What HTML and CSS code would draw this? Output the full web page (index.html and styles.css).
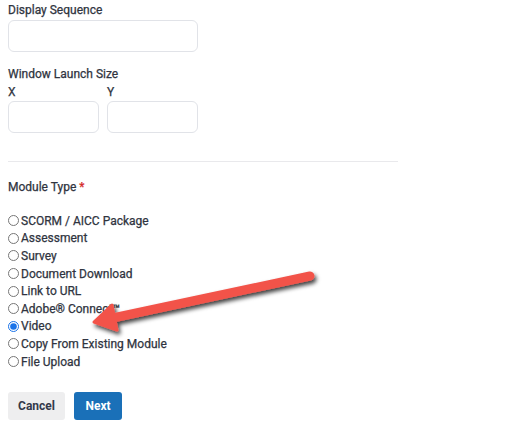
FILE: index.html
```html
<!DOCTYPE html>
<html lang="en">
<head>
    <meta charset="UTF-8">
    <meta name="viewport" content="width=device-width, initial-scale=1.0">
    <title>Module Settings</title>
    <link rel="stylesheet" href="styles.css">
</head>
<body>

    <div class="form">
        <label class="field-label first">Display Sequence</label>
        <input type="text" class="box wide">

        <label class="field-label launch">Window Launch Size</label>
        <div class="size-row">
            <div class="size-col">
                <label class="field-label">X</label>
                <input type="text" class="box narrow">
            </div>
            <div class="size-col">
                <label class="field-label">Y</label>
                <input type="text" class="box narrow">
            </div>
        </div>

        <hr class="divider">

        <label class="field-label module">Module Type <span class="req">*</span></label>

        <div class="options">
            <label class="opt"><input type="radio" name="type">SCORM / AICC Package</label>
            <label class="opt"><input type="radio" name="type">Assessment</label>
            <label class="opt"><input type="radio" name="type">Survey</label>
            <label class="opt"><input type="radio" name="type">Document Download</label>
            <label class="opt"><input type="radio" name="type">Link to URL</label>
            <label class="opt"><input type="radio" name="type">Adobe® Connect™</label>
            <label class="opt"><input type="radio" name="type" checked>Video</label>
            <label class="opt"><input type="radio" name="type">Copy From Existing Module</label>
            <label class="opt"><input type="radio" name="type">File Upload</label>
        </div>

        <div class="buttons">
            <button class="btn cancel">Cancel</button>
            <button class="btn next">Next</button>
        </div>
    </div>

    <!-- annotation arrow -->
    <svg class="arrow" width="517" height="426" viewBox="0 0 517 426">
        <defs>
            <filter id="shadow" x="-20%" y="-50%" width="140%" height="200%">
                <feDropShadow dx="2" dy="3" stdDeviation="2" flood-color="#000" flood-opacity="0.75"/>
            </filter>
        </defs>
        <g filter="url(#shadow)">
            <line x1="310" y1="276" x2="108" y2="319" stroke="#f2534a" stroke-width="9" stroke-linecap="round"/>
            <path d="M94 322 L112 305 L117 330 Z" fill="#f2534a" stroke="#f2534a" stroke-width="3" stroke-linejoin="round"/>
        </g>
    </svg>

</body>
</html>
```

FILE: styles.css
```css
body {
    margin: 0;
    padding: 0 8px;
    background: #fff;
    font-family: Roboto, "Liberation Sans", Arial, sans-serif;
    font-size: 12px;
    color: #2f3440;
}

.form {
    width: 390px;
    display: flex;
    flex-direction: column;
    align-items: flex-start;
}

.field-label {
    display: block;
    font-weight: 400;
    line-height: 16px;
    -webkit-text-stroke: 0.25px #2f3440;
}

.first {
    margin-top: 2px;
}

.box {
    box-sizing: border-box;
    height: 32px;
    border: 1px solid #e1e3e8;
    border-radius: 6px;
    background: #fff;
    margin: 2px 0 0;
    padding: 0 8px;
}

.wide {
    width: 190px;
}

.narrow {
    width: 91px;
    margin-top: 1px;
}

.launch {
    margin-top: 14px;
}

.size-row {
    display: flex;
    gap: 8px;
    margin-top: 2px;
}

.divider {
    width: 390px;
    border: none;
    border-top: 1px solid #e9e9ec;
    margin: 28px 0 0;
}

.module {
    margin-top: 17px;
}

.req {
    color: #d42a2a;
    -webkit-text-stroke: 0.25px #d42a2a;
}

.options {
    margin-top: 17px;
    display: flex;
    flex-direction: column;
}

.opt {
    display: flex;
    align-items: center;
    height: 17.6px;
    font-weight: 400;
    -webkit-text-stroke: 0.25px #2f3440;
}

.opt input {
    width: 11px;
    height: 11px;
    margin: 0 2px 0 0;
    accent-color: #1a73e8;
}

.buttons {
    display: flex;
    gap: 9px;
    margin-top: 22px;
}

.btn {
    height: 28px;
    border: none;
    border-radius: 3px;
    font-family: inherit;
    font-size: 12px;
    font-weight: 700;
    cursor: pointer;
}

.cancel {
    width: 57px;
    background: #eeeeef;
    color: #33394a;
}

.next {
    width: 48px;
    background: #1a70b8;
    color: #fff;
}

.arrow {
    position: absolute;
    top: 0;
    left: 0;
    pointer-events: none;
}
```
